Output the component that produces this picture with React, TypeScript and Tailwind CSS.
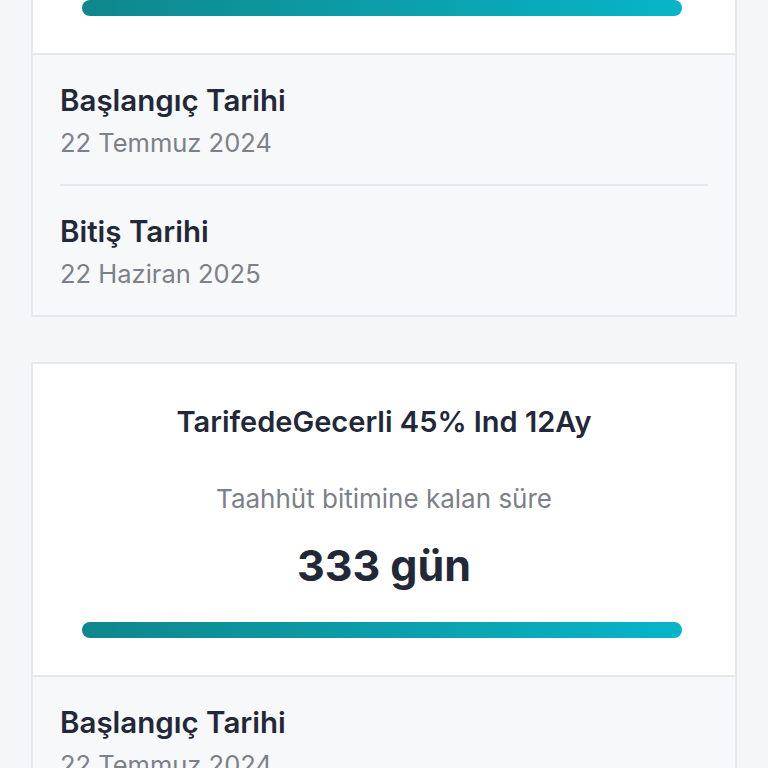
import React from "react";

interface Commitment {
  title: string;
  remainingDays: number;
  progress: number;
  startDate: string;
  endDate: string;
}

const items: Commitment[] = [
  {
    title: "TarifedeGecerli 45% Ind 12Ay",
    remainingDays: 333,
    progress: 100,
    startDate: "22 Temmuz 2024",
    endDate: "22 Haziran 2025",
  },
  {
    title: "TarifedeGecerli 45% Ind 12Ay",
    remainingDays: 333,
    progress: 100,
    startDate: "22 Temmuz 2024",
    endDate: "22 Haziran 2025",
  },
];

function DateRow({ label, value }: { label: string; value: string }) {
  return (
    <div className="pt-[27px] pb-[24px]">
      <p className="text-[29.5px] leading-[36px] font-semibold text-[#232838]">{label}</p>
      <p className="mt-[8px] text-[25.5px] leading-[34px] text-[#7c8088]">{value}</p>
    </div>
  );
}

function CommitmentCard({ item }: { item: Commitment }) {
  return (
    <div className="border-2 border-[#e6e8eb] bg-white">
      <div className="flex flex-col items-center px-[49px] pt-[40px] pb-[37px]">
        <h3 className="text-[29px] leading-[36px] font-semibold text-[#232838]">{item.title}</h3>
        <p className="mt-[43px] text-[26px] leading-[32px] text-[#7c8088]">Taahhüt bitimine kalan süre</p>
        <p className="mt-[23px] text-[43px] leading-[54px] font-bold text-[#232838]">
          {item.remainingDays} gün
        </p>
        <div className="mt-[30px] self-stretch pr-[4px]">
          <div className="h-[16px] w-full rounded-full bg-[#e6e8eb]">
            <div
              className="h-full rounded-full bg-gradient-to-r from-[#0e878c] to-[#06b5c8]"
              style={{ width: `${item.progress}%` }}
            />
          </div>
        </div>
      </div>
      <div className="border-t-2 border-[#e6e8eb] bg-[#f7f8fa] px-[27px]">
        <DateRow label="Başlangıç Tarihi" value={item.startDate} />
        <div className="h-[2px] bg-[#e6e8eb]" />
        <DateRow label="Bitiş Tarihi" value={item.endDate} />
      </div>
    </div>
  );
}

export default function App() {
  return (
    <div
      className="min-h-screen overflow-hidden bg-[#f5f6f8] px-[31px]"
      style={{ fontFamily: "Inter, 'Noto Sans', sans-serif" }}
    >
      <div className="-mt-[260px] flex flex-col gap-[45px] pb-10">
        {items.map((item, i) => (
          <CommitmentCard key={i} item={item} />
        ))}
      </div>
    </div>
  );
}
